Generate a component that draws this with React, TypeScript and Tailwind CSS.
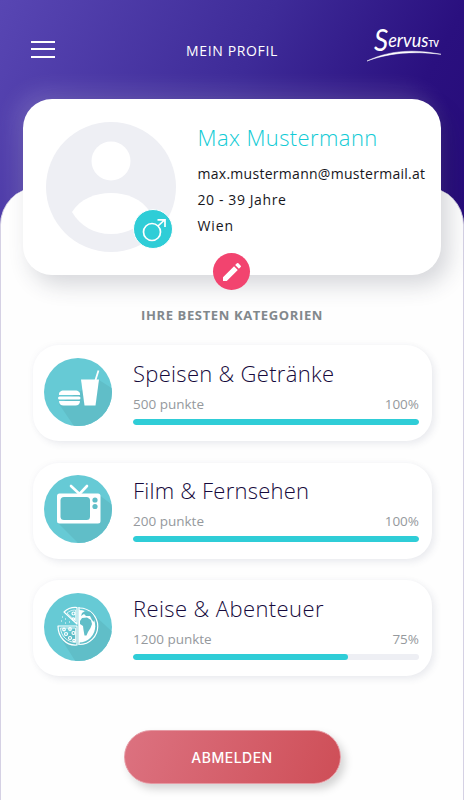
import type { ReactNode } from "react";

type Category = {
  id: string;
  title: string;
  titleClass: string;
  points: number;
  percent: number;
  icon: ReactNode;
};

function ServusLogo() {
  return (
    <svg viewBox="0 0 76 36" className="h-9 w-[76px] overflow-visible" fill="#fff" aria-label="Servus TV">
      <text x="8" y="25.500" fontSize="31" fontStyle="italic" fontFamily="Lato, sans-serif" textLength="65" lengthAdjust="spacingAndGlyphs">
        S<tspan dy="-3.200" fontSize="20">ervus</tspan>
        <tspan fontSize="9" fontWeight="700" fontStyle="normal">TV</tspan>
      </text>
      <path d="M1 36C20 27 43 23 75 29.300C45 25.500 21 28.500 1 36Z" stroke="#fff" strokeWidth=".5" />
    </svg>
  );
}

function Disc({ shadow, children }: { shadow: string; children: ReactNode }) {
  return (
    <svg viewBox="0 0 68 68" className="size-[68px] shrink-0 overflow-hidden rounded-full bg-[#66cad5]">
      <path d={shadow} fill="#60bec8" />
      {children}
    </svg>
  );
}

function FoodIcon() {
  return (
    <Disc shadow="M55 22L74 34V74H34L15 46Z">
      <path d="M37 21.500H55L51.500 47.500H40.500Z" fill="#fff" />
      <path d="M51.500 22L54.500 12.500" stroke="#fff" strokeWidth="1.800" />
      <path d="M15 37C14.500 34 17 32.500 19.500 32.500H31.500C34 32.500 36.500 34 36 37Z" fill="#fff" />
      <rect x="14" y="38.500" width="22.500" height="3" rx="1.500" fill="#fff" />
      <path d="M15 43H36C36 46 34 47.500 31.500 47.500H19.500C17 47.500 15 46 15 43Z" fill="#fff" />
    </Disc>
  );
}

function TvIcon() {
  return (
    <Disc shadow="M55 20L74 34V74H40L14 48Z">
      <path d="M27 11L35.500 19L43 11" stroke="#fff" strokeWidth="2.600" fill="none" strokeLinecap="round" />
      <rect x="13" y="18.500" width="43.500" height="30" rx="2.500" fill="#fff" />
      <rect x="16.500" y="22" width="29.500" height="23" rx="3.500" fill="#60bec8" />
      <circle cx="51" cy="25" r="2.600" fill="#60bec8" />
      <circle cx="51" cy="31.500" r="2.600" fill="#60bec8" />
    </Disc>
  );
}

function TravelIcon() {
  return (
    <Disc shadow="M48 20L74 44V74H35L18 47Z">
      {/* pizza half */}
      <g fill="none" stroke="#fff" strokeWidth="1.200" strokeLinejoin="round">
        <path d="M33 14.500C27 14 23 16 20 19L33 31Z" />
        <path d="M31.500 17C27.500 17 25 18.500 23 20L31.500 28Z" strokeWidth=".7" />
        <path d="M14 33H33V52C22 53 14 44 14 33Z" />
        <path d="M16.500 35H31.500V49.500C23 49 17 43 16.500 35Z" strokeWidth=".8" />
        <circle cx="29.500" cy="20.500" r="1.500" />
        <circle cx="29.500" cy="26" r="1.200" />
        <circle cx="20" cy="36.500" r="1.300" />
        <circle cx="26" cy="36" r="1.300" />
        <circle cx="22" cy="41" r="1.500" />
        <circle cx="29.500" cy="40" r="1.500" />
        <circle cx="26" cy="45" r="1.500" />
        <circle cx="30" cy="47.500" r="1.200" />
      </g>
      <path d="M18 24H19M21 26H22M17 28H18M21 30H22M25 29H26" stroke="#fff" strokeWidth="1" />
      {/* globe half */}
      <path d="M35.500 15A18 18 0 0 1 35.500 51.500" fill="none" stroke="#fff" strokeWidth="1.200" />
      <path d="M35 14V52" stroke="#fff" strokeWidth="1.400" />
      <path d="M35 17A16 16 0 0 1 35 49.500Z" fill="#fff" />
      <path d="M36 28L38 25L43 24.500L47 27L48 31L46.500 35L44 39L42.500 42.500H40.500L39.500 37L39 33L36 31Z" fill="#60bec8" />
      <path d="M38 20L41 18L44 19L46 18.500L48.500 21L50 24V29L48 27L46 23L42 23L40 21L37 23Z" fill="#60bec8" />
    </Disc>
  );
}

const categories: Category[] = [
  { id: "food", title: "Speisen & Getränke", titleClass: "tracking-[0.3px]", points: 500, percent: 100, icon: <FoodIcon /> },
  { id: "tv", title: "Film & Fernsehen", titleClass: "tracking-[0.22px]", points: 200, percent: 100, icon: <TvIcon /> },
  { id: "travel", title: "Reise & Abenteuer", titleClass: "tracking-[0.4px]", points: 1200, percent: 75, icon: <TravelIcon /> },
];

function CategoryCard({ category }: { category: Category }) {
  return (
    <div className="flex h-24 items-start rounded-[26px] bg-white pl-[11px] pr-[12.5px] pt-[12.5px] shadow-[3px_3px_7px_rgba(60,70,110,0.10),-2px_-2px_6px_rgba(60,70,110,0.02)]">
      {category.icon}
      <div className="ml-[21.5px] flex-1">
        <h3 className={`-mt-px h-8 whitespace-nowrap text-[22px] font-[340] leading-8 text-[#160a3c] ${category.titleClass}`}>
          {category.title}
        </h3>
        <div className="mt-[5px] flex h-5 justify-between text-[13.5px] leading-5 text-[#95999d]">
          <span>{category.points} punkte</span>
          <span>{category.percent}%</span>
        </div>
        <div className="mt-[5px] h-1.5 overflow-hidden rounded-full bg-[#eeeff4]">
          <div className="h-full rounded-full bg-[#2fcdd7]" style={{ width: `${category.percent}%` }} />
        </div>
      </div>
    </div>
  );
}

function ProfileCard() {
  return (
    <section className="relative mx-auto -mt-[88px] flex h-44 w-[418px] rounded-[29px] bg-white pl-[23px] shadow-[8px_10px_22px_rgba(45,50,70,0.19),-7px_-7px_22px_rgba(255,255,255,0.16)]">
      <div className="relative mt-[23px] size-[130px] shrink-0">
        <svg viewBox="0 0 130 130" className="size-full">
          <circle cx="65" cy="65" r="65" fill="#eeeff4" />
          <circle cx="65" cy="39" r="19.500" fill="#fff" />
          <path d="M26 90C34 77 49 71 65 71S96 77 104 90C96 104 82 112 65 112S34 104 26 90Z" fill="#fff" />
        </svg>
        <div className="absolute left-[87px] top-[87px] size-10 rounded-full border border-white bg-[#2fcdd7]">
          <svg viewBox="0 0 38 38" className="size-full" fill="none" stroke="#fff" strokeWidth="1.700">
            <circle cx="18" cy="22" r="8.500" />
            <path d="M24 16L31 9.500M23.500 9.800H31V17" />
          </svg>
        </div>
      </div>
      <div className="ml-[21.5px] whitespace-nowrap pt-[23px] text-[14px] leading-[26px] text-[#16161c]">
        <h2 className="-mt-px mb-2 text-[22px] font-[340] leading-8 tracking-[0.4px] text-[#12cbd5]">Max Mustermann</h2>
        <p className="tracking-[0.28px]">max.mustermann@mustermail.at</p>
        <p className="tracking-[0.6px]">20 - 39 Jahre</p>
        <p className="tracking-[0.9px]">Wien</p>
      </div>
      <button aria-label="Bearbeiten" className="absolute left-[190px] top-[154px] flex size-[37px] items-center justify-center rounded-full bg-[#f2446f]">
        <svg viewBox="0 0 24 24" className="size-6" fill="#fff">
          <path d="M3 17.250V21h3.750L17.810 9.940l-3.750-3.750L3 17.250zM20.710 7.040a1 1 0 0 0 0-1.410l-2.340-2.340a1 1 0 0 0-1.410 0l-1.830 1.830 3.750 3.750 1.830-1.830z" />
        </svg>
      </button>
    </section>
  );
}

export default function App() {
  return (
    <div className="h-[800px] w-[464px] overflow-hidden bg-[linear-gradient(118deg,#5846b3_0%,#3e2b98_48%,#2a107f_80%,#260b79_100%)] bg-[length:464px_225px] bg-no-repeat font-['Open_Sans',sans-serif]">
      <header className="flex h-[99px] items-start justify-between pl-[31px] pr-[22px]">
        <button aria-label="Menü" className="mt-[41px] flex w-6 flex-col gap-[5.4px]">
          <span className="h-[2px] bg-white" />
          <span className="h-[2px] bg-white" />
          <span className="h-[2px] bg-white" />
        </button>
        <h1 className="ml-[43px] mt-[41px] text-[14px] leading-5 tracking-[0.65px] text-white">MEIN PROFIL</h1>
        <div className="mt-[25px]">
          <ServusLogo />
        </div>
      </header>
      <main className="mt-[88px] flow-root h-[613px] rounded-t-[38px] border-x border-[#d5d1e4] bg-[#fefefe]">
        <ProfileCard />
        <h2 className="mt-[30px] text-center text-[13px] font-bold leading-5 tracking-[0.62px] text-[#82888c]">IHRE BESTEN KATEGORIEN</h2>
        <div className="mx-auto mt-5 flex w-[399px] flex-col gap-[21.5px]">
          {categories.map((category) => (
            <CategoryCard key={category.id} category={category} />
          ))}
        </div>
        <button className="mx-auto mt-[54px] block h-[54px] w-[217px] rounded-[27px] border border-[#e59aa4] bg-[linear-gradient(110deg,#dc7280,#ce4e57)] font-[Inter,sans-serif] text-[14px] font-medium tracking-[0.5px] text-white shadow-[4px_5px_9px_rgba(0,0,0,0.17)]">
          ABMELDEN
        </button>
      </main>
    </div>
  );
}
